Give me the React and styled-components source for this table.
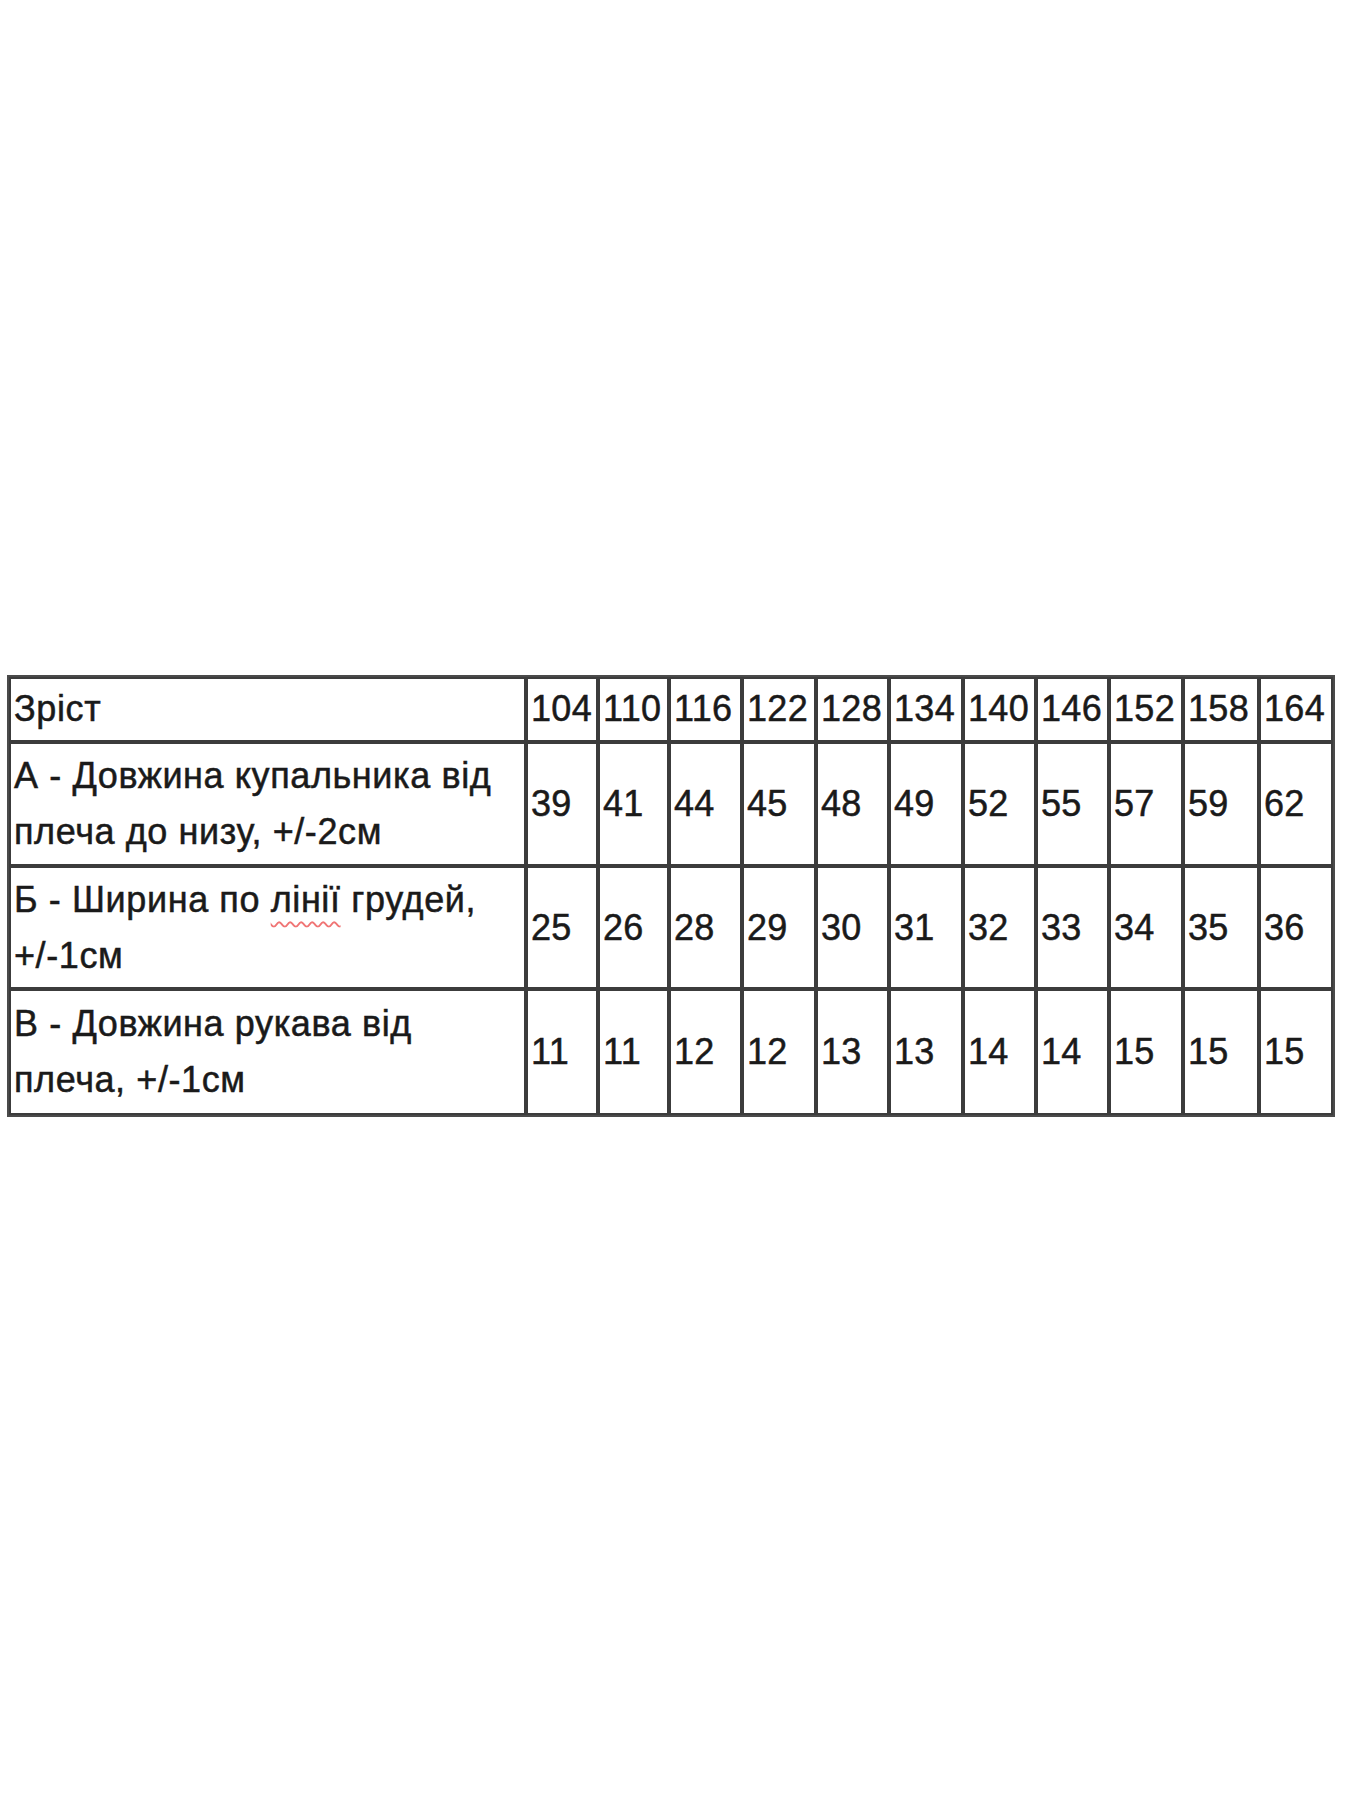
import React from "react";
import styled, { createGlobalStyle } from "styled-components";

const GlobalStyle = createGlobalStyle`
  html, body {
    margin: 0;
    padding: 0;
    background: #ffffff;
  }
  body {
    font-family: "Liberation Sans", Arial, sans-serif;
    color: #1a1a1a;
  }
`;

const Page = styled.div`
  padding: 675px 17px 0 7px;
  min-height: 1800px;
  box-sizing: border-box;
`;

const SizeTable = styled.table`
  width: 1324px;
  table-layout: fixed;
  border-collapse: separate;
  border-spacing: 0;
  border: 2px solid #4a4a4a;
  box-sizing: border-box;
`;

const Row = styled.tr`
  height: ${(p) => p.$height}px;
`;

const Cell = styled.td`
  border: 2px solid #3c3c3c;
  padding: 0 2px ${(p) => (p.$head ? "2px" : "0")} 3px;
  vertical-align: middle;
  text-align: left;
  overflow: hidden;
  white-space: nowrap;
`;

const Text = styled.span`
  display: inline-block;
  font-size: 36px;
  line-height: 56px;
  letter-spacing: ${(p) => (p.$label ? "0.6px" : "0.3px")};
  -webkit-text-stroke: 0.5px #1a1a1a;
  color: #1a1a1a;
`;

const Squiggle = styled.span`
  text-decoration: underline wavy #f07474;
  text-decoration-thickness: 1.5px;
  text-underline-offset: 9px;
  text-decoration-skip-ink: none;
`;

const sizes = [104, 110, 116, 122, 128, 134, 140, 146, 152, 158, 164];

const rows = [
  {
    label: ["А - Довжина купальника від", "плеча до низу, +/-2см"],
    values: [39, 41, 44, 45, 48, 49, 52, 55, 57, 59, 62],
    height: 124,
  },
  {
    label: [
      <>
        Б - Ширина по <Squiggle>лінії</Squiggle> грудей,
      </>,
      "+/-1см",
    ],
    values: [25, 26, 28, 29, 30, 31, 32, 33, 34, 35, 36],
    height: 123,
  },
  {
    label: ["В - Довжина рукава від", "плеча, +/-1см"],
    values: [11, 11, 12, 12, 13, 13, 14, 14, 15, 15, 15],
    height: 126,
  },
];

const colWidths = [72, 71, 73, 74, 73, 74, 73, 73, 74, 76, 74];

const App = () => {
  return (
    <>
      <GlobalStyle />
      <Page>
        <SizeTable>
          <colgroup>
            <col style={{ width: 517 }} />
            {colWidths.map((w, i) => (
              <col key={i} style={{ width: w }} />
            ))}
          </colgroup>
          <tbody>
            <Row $height={65}>
              <Cell $head>
                <Text $label>Зріст</Text>
              </Cell>
              {sizes.map((s) => (
                <Cell key={s} $head>
                  <Text>{s}</Text>
                </Cell>
              ))}
            </Row>
            {rows.map((row, i) => (
              <Row key={i} $height={row.height}>
                <Cell>
                  <Text $label>
                    {row.label[0]}
                    <br />
                    {row.label[1]}
                  </Text>
                </Cell>
                {row.values.map((v, j) => (
                  <Cell key={j}>
                    <Text>{v}</Text>
                  </Cell>
                ))}
              </Row>
            ))}
          </tbody>
        </SizeTable>
      </Page>
    </>
  );
};

export default App;
